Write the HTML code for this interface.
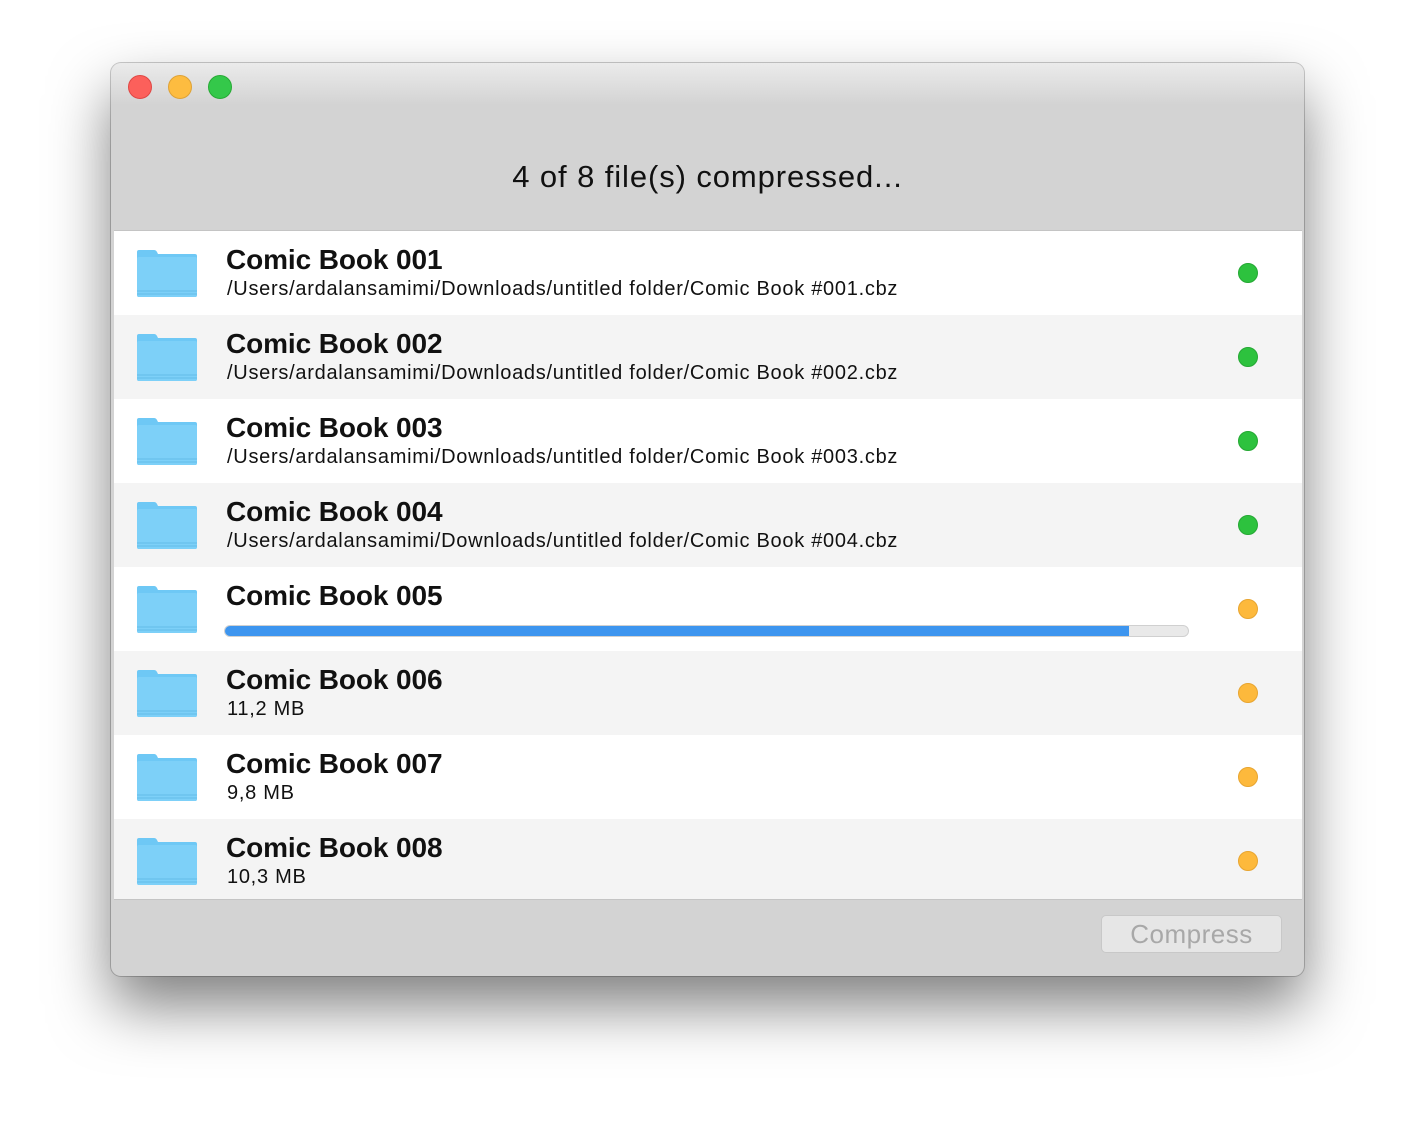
<!DOCTYPE html>
<html><head><meta charset="utf-8"><style>
html,body{margin:0;padding:0;width:1416px;height:1136px;background:#fff;overflow:hidden}
body{font-family:"Liberation Sans",sans-serif;position:relative}
.win{position:absolute;left:111px;top:63px;width:1193px;height:913px;border-radius:10px;background:#d3d3d3;box-shadow:0 30px 60px rgba(0,0,0,0.5),0 0 0 1px rgba(0,0,0,0.2);overflow:hidden}
.tb{position:absolute;left:0;top:0;width:100%;height:42px;background:linear-gradient(#ebebeb,#d3d3d3)}
.light{position:absolute;top:12px;width:24px;height:24px;border-radius:50%;box-sizing:border-box}
.title{position:absolute;left:0;width:100%;top:96px;text-align:center;font-size:31px;color:#111;letter-spacing:0.9px}
.list{position:absolute;left:3px;top:167px;width:1188px;height:668px;background:#fff;border-top:1px solid #c4c4c4;border-bottom:1px solid #c4c4c4;overflow:hidden}
.row{position:absolute;left:0;width:100%;height:84px}
.row.alt{background:#f4f4f4}
.fold{position:absolute;left:22px;top:18px}
.name{position:absolute;left:112px;top:13px;font-size:28px;font-weight:bold;color:#111;letter-spacing:-0.1px}
.sub{position:absolute;left:113px;top:47px;font-size:20px;color:#111;letter-spacing:0.72px}
.dot{position:absolute;left:1124px;top:32px;width:20px;height:20px;border-radius:50%;box-sizing:border-box}
.g{background:#2dc23e;border:1px solid #25a834}
.y{background:#fdb93c;border:1px solid #e8a530}
.bar{position:absolute;left:110px;top:58px;width:965px;height:12px;border-radius:6px;background:#e9e9e9;border:1px solid #d0d0d0;box-sizing:border-box;overflow:hidden}
.fill{width:904px;height:100%;background:#3d95ef}
.btn{position:absolute;left:990px;top:852px;width:181px;height:38px;border-radius:5px;background:#e6e6e6;border:1px solid #c8c8c8;box-sizing:border-box;text-align:center;font-size:26px;line-height:36px;color:#a8a8a8;letter-spacing:0.5px}
</style></head><body>
<div class="win">
<div class="tb"></div>
<div class="light" style="left:17px;background:#fc605b;border:1px solid #df4744"></div>
<div class="light" style="left:57px;background:#fdbc40;border:1px solid #dea236"></div>
<div class="light" style="left:97px;background:#34c84a;border:1px solid #27aa35"></div>
<div class="title">4 of 8 file(s) compressed...</div>
<div class="list">
<div class="row" style="top:0"><svg class="fold" width="62" height="50" viewBox="0 0 62 50"><path d="M1 3 Q1 1 3 1 H18 Q20 1 21 3 L22 5 H59 Q61 5 61 7 V46 Q61 48 59 48 H3 Q1 48 1 46 Z" fill="#6ec8f5"/><rect x="1" y="8" width="60" height="40" rx="2" fill="#7dd0f8"/><path d="M1 42 H61 M1 45 H61" stroke="#64bbe8" stroke-width="1"/></svg><div class="name">Comic Book 001</div><div class="sub">/Users/ardalansamimi/Downloads/untitled folder/Comic Book #001.cbz</div><div class="dot g"></div></div>
<div class="row alt" style="top:84px"><svg class="fold" width="62" height="50" viewBox="0 0 62 50"><path d="M1 3 Q1 1 3 1 H18 Q20 1 21 3 L22 5 H59 Q61 5 61 7 V46 Q61 48 59 48 H3 Q1 48 1 46 Z" fill="#6ec8f5"/><rect x="1" y="8" width="60" height="40" rx="2" fill="#7dd0f8"/><path d="M1 42 H61 M1 45 H61" stroke="#64bbe8" stroke-width="1"/></svg><div class="name">Comic Book 002</div><div class="sub">/Users/ardalansamimi/Downloads/untitled folder/Comic Book #002.cbz</div><div class="dot g"></div></div>
<div class="row" style="top:168px"><svg class="fold" width="62" height="50" viewBox="0 0 62 50"><path d="M1 3 Q1 1 3 1 H18 Q20 1 21 3 L22 5 H59 Q61 5 61 7 V46 Q61 48 59 48 H3 Q1 48 1 46 Z" fill="#6ec8f5"/><rect x="1" y="8" width="60" height="40" rx="2" fill="#7dd0f8"/><path d="M1 42 H61 M1 45 H61" stroke="#64bbe8" stroke-width="1"/></svg><div class="name">Comic Book 003</div><div class="sub">/Users/ardalansamimi/Downloads/untitled folder/Comic Book #003.cbz</div><div class="dot g"></div></div>
<div class="row alt" style="top:252px"><svg class="fold" width="62" height="50" viewBox="0 0 62 50"><path d="M1 3 Q1 1 3 1 H18 Q20 1 21 3 L22 5 H59 Q61 5 61 7 V46 Q61 48 59 48 H3 Q1 48 1 46 Z" fill="#6ec8f5"/><rect x="1" y="8" width="60" height="40" rx="2" fill="#7dd0f8"/><path d="M1 42 H61 M1 45 H61" stroke="#64bbe8" stroke-width="1"/></svg><div class="name">Comic Book 004</div><div class="sub">/Users/ardalansamimi/Downloads/untitled folder/Comic Book #004.cbz</div><div class="dot g"></div></div>
<div class="row" style="top:336px"><svg class="fold" width="62" height="50" viewBox="0 0 62 50"><path d="M1 3 Q1 1 3 1 H18 Q20 1 21 3 L22 5 H59 Q61 5 61 7 V46 Q61 48 59 48 H3 Q1 48 1 46 Z" fill="#6ec8f5"/><rect x="1" y="8" width="60" height="40" rx="2" fill="#7dd0f8"/><path d="M1 42 H61 M1 45 H61" stroke="#64bbe8" stroke-width="1"/></svg><div class="name">Comic Book 005</div><div class="bar"><div class="fill"></div></div><div class="dot y"></div></div>
<div class="row alt" style="top:420px"><svg class="fold" width="62" height="50" viewBox="0 0 62 50"><path d="M1 3 Q1 1 3 1 H18 Q20 1 21 3 L22 5 H59 Q61 5 61 7 V46 Q61 48 59 48 H3 Q1 48 1 46 Z" fill="#6ec8f5"/><rect x="1" y="8" width="60" height="40" rx="2" fill="#7dd0f8"/><path d="M1 42 H61 M1 45 H61" stroke="#64bbe8" stroke-width="1"/></svg><div class="name">Comic Book 006</div><div class="sub">11,2 MB</div><div class="dot y"></div></div>
<div class="row" style="top:504px"><svg class="fold" width="62" height="50" viewBox="0 0 62 50"><path d="M1 3 Q1 1 3 1 H18 Q20 1 21 3 L22 5 H59 Q61 5 61 7 V46 Q61 48 59 48 H3 Q1 48 1 46 Z" fill="#6ec8f5"/><rect x="1" y="8" width="60" height="40" rx="2" fill="#7dd0f8"/><path d="M1 42 H61 M1 45 H61" stroke="#64bbe8" stroke-width="1"/></svg><div class="name">Comic Book 007</div><div class="sub">9,8 MB</div><div class="dot y"></div></div>
<div class="row alt" style="top:588px"><svg class="fold" width="62" height="50" viewBox="0 0 62 50"><path d="M1 3 Q1 1 3 1 H18 Q20 1 21 3 L22 5 H59 Q61 5 61 7 V46 Q61 48 59 48 H3 Q1 48 1 46 Z" fill="#6ec8f5"/><rect x="1" y="8" width="60" height="40" rx="2" fill="#7dd0f8"/><path d="M1 42 H61 M1 45 H61" stroke="#64bbe8" stroke-width="1"/></svg><div class="name">Comic Book 008</div><div class="sub">10,3 MB</div><div class="dot y"></div></div>
</div>
<div class="btn">Compress</div>
</div>
</body></html>
